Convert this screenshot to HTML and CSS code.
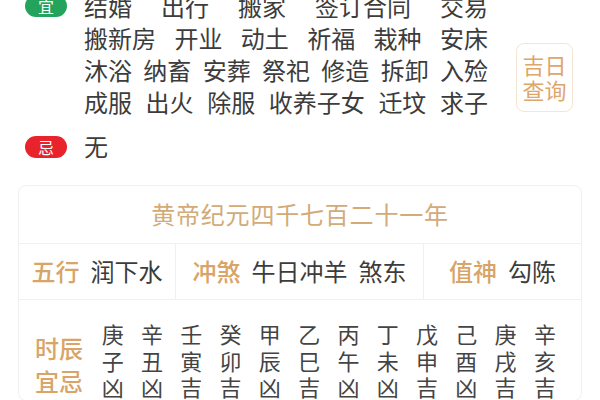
FILE: index.html
```html
<!DOCTYPE html>
<html lang="zh-CN">
<head>
<meta charset="utf-8">
<link rel="stylesheet" href="styles.css">
</head>
<body>
<div class="page">
  <section class="yi">
    <span class="badge badge-green">宜</span>
    <div class="list">
      <div class="row"><span>结婚</span><span>出行</span><span>搬家</span><span>签订合同</span><span>交易</span></div>
      <div class="row"><span>搬新房</span><span>开业</span><span>动土</span><span>祈福</span><span>栽种</span><span>安床</span></div>
      <div class="row"><span>沐浴</span><span>纳畜</span><span>安葬</span><span>祭祀</span><span>修造</span><span>拆卸</span><span>入殓</span></div>
      <div class="row"><span>成服</span><span>出火</span><span>除服</span><span>收养子女</span><span>迁坟</span><span>求子</span></div>
    </div>
    <div class="jiri">吉日<br>查询</div>
  </section>
  <section class="ji">
    <span class="badge badge-red">忌</span>
    <span class="ji-text">无</span>
  </section>
  <section class="card">
    <div class="title">黄帝纪元四千七百二十一年</div>
    <div class="info">
      <div class="cell"><span class="label">五行</span><span class="val">润下水</span></div>
      <div class="cell"><span class="label">冲煞</span><span class="val">牛日冲羊</span><span class="val">煞东</span></div>
      <div class="cell"><span class="label">值神</span><span class="val">勾陈</span></div>
    </div>
    <div class="hours">
      <div class="hours-label">时辰<br>宜忌</div>
      <div class="hours-grid">
        <span>庚</span><span>子</span><span>凶</span>
        <span>辛</span><span>丑</span><span>凶</span>
        <span>壬</span><span>寅</span><span>吉</span>
        <span>癸</span><span>卯</span><span>吉</span>
        <span>甲</span><span>辰</span><span>凶</span>
        <span>乙</span><span>巳</span><span>吉</span>
        <span>丙</span><span>午</span><span>凶</span>
        <span>丁</span><span>未</span><span>凶</span>
        <span>戊</span><span>申</span><span>吉</span>
        <span>己</span><span>酉</span><span>凶</span>
        <span>庚</span><span>戌</span><span>吉</span>
        <span>辛</span><span>亥</span><span>吉</span>
      </div>
    </div>
  </section>
</div>
</body>
</html>
```

FILE: styles.css
```css
html, body {
  margin: 0;
  padding: 0;
  background: #ffffff;
}
body {
  font-family: "Noto Sans CJK SC", "Noto Sans", sans-serif;
  color: #3c3c3c;
  overflow: hidden;
}
.page {
  width: 600px;
  margin-top: -10px;
}
.yi {
  display: flex;
  align-items: flex-start;
  padding-left: 25px;
}
.badge {
  display: flex;
  align-items: center;
  justify-content: center;
  width: 42px;
  height: 22px;
  border-radius: 11px;
  color: #ffffff;
  font-size: 16px;
  line-height: 22px;
  flex: none;
}
.badge-green {
  background: #23a35c;
  margin-top: 5px;
}
.badge-red {
  background: #e8232b;
  margin-top: 6px;
}
.list {
  width: 404px;
  margin-left: 17px;
  font-size: 24px;
}
.row {
  display: flex;
  justify-content: space-between;
  height: 32px;
  line-height: 32px;
  white-space: nowrap;
}
.jiri {
  box-sizing: border-box;
  width: 57px;
  height: 69px;
  margin-left: 28px;
  margin-top: 53px;
  border: 1px solid #f4e6d4;
  border-radius: 8px;
  color: #dea66a;
  font-size: 22px;
  line-height: 25px;
  text-align: center;
  padding-top: 8px;
}
.ji {
  display: flex;
  align-items: flex-start;
  padding-left: 25px;
  margin-top: 12px;
}
.ji-text {
  margin-left: 17px;
  font-size: 24px;
  line-height: 32px;
}
.card {
  box-sizing: border-box;
  width: 564px;
  margin: 23px 18px 0 18px;
  border: 1px solid #f0f0f0;
  border-radius: 8px;
  background: #ffffff;
}
.title {
  height: 57px;
  line-height: 55px;
  text-align: center;
  font-size: 24px;
  color: #d2ab78;
  letter-spacing: 0.8px;
  border-bottom: 1px solid #f0f0f0;
}
.info {
  display: grid;
  grid-template-columns: 157px 248px 1fr;
  height: 55px;
  border-bottom: 1px solid #f0f0f0;
}
.cell {
  display: flex;
  align-items: center;
  justify-content: center;
  gap: 11px;
  font-size: 24px;
  line-height: 28px;
  padding-bottom: 2px;
  border-right: 1px solid #f0f0f0;
  white-space: nowrap;
}
.cell:last-child {
  border-right: none;
}
.label {
  color: #d9a467;
  font-weight: 500;
}
.val {
  color: #3c3c3c;
}
.hours {
  display: flex;
  align-items: flex-start;
  padding: 20px 0 0 16px;
}
.hours-label {
  width: 48px;
  font-size: 24px;
  line-height: 33px;
  color: #d9a467;
  font-weight: 500;
  margin-top: 11px;
}
.hours-grid {
  display: grid;
  grid-auto-flow: column;
  grid-template-rows: repeat(3, 26.5px);
  grid-template-columns: repeat(12, 39.3px);
  margin-left: 10px;
  font-size: 22px;
  line-height: 26.5px;
  text-align: center;
  color: #444444;
}
```
